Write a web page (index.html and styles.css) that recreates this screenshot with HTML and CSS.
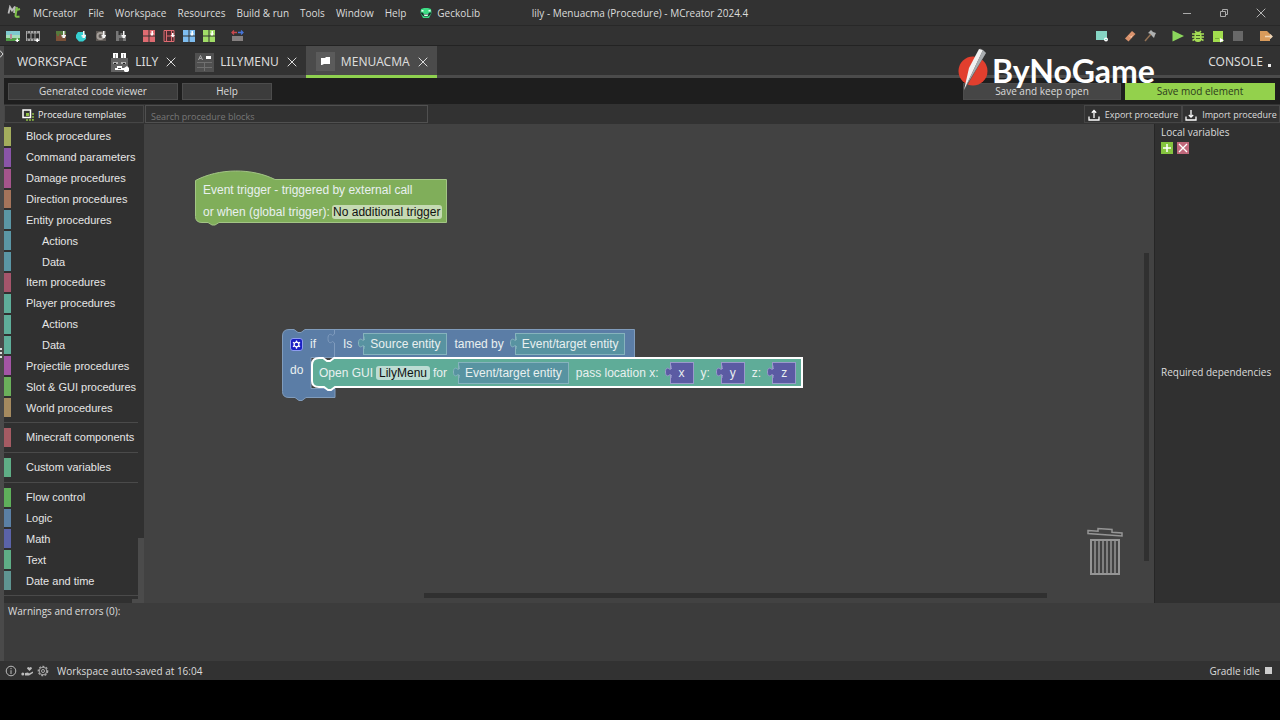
FILE: index.html
```html
<!DOCTYPE html>
<html lang="en">
<head>
  <meta charset="UTF-8">
  <meta name="viewport" content="width=device-width, initial-scale=1.0">
  <title>lily - Menuacma (Procedure) - MCreator 2024.4</title>
  <link rel="stylesheet" href="styles.css">
</head>
<body>
  <!-- shared shapes -->
  <svg class="defs" aria-hidden="true">
    <symbol id="down" viewBox="0 0 14 14"><path d="M9 2h1.500v4H12v1.500h-1V9H8.500V7.500h-1V6H9z" fill="#f4f4f4"/></symbol>
    <symbol id="x" viewBox="0 0 10 10"><path d="M.7.7l8.600 8.600M9.300.7L.7 9.300" fill="none" stroke="currentColor" stroke-width="1"/></symbol>
    <symbol id="grid" viewBox="0 0 14 14"><path d="M1 1h5.500v5.500H1zM7.500 1H13v5.500H7.500zM1 7.500h5.500V13H1zM7.500 7.500H13V13H7.500z" fill="currentColor"/><path d="M9.500 2H11v2.500h1L10 7 8 4.500h1.500z" fill="#fff"/></symbol>
    <symbol id="plug" viewBox="0 0 7 14"><path d="M7 .5V3L5 4.500C2.500 2 .5 3 .5 7s2 5 4.500 2.500l2 1.500V13" fill="inherit" stroke="inherit"/></symbol>
  </svg>

  <div class="app">
    <!-- Menu bar -->
    <header class="menubar">
      <svg class="logo" viewBox="0 0 14 14"><path d="M1.500 8.500L3 2l2 3.500L8 1.500 7 8" fill="none" stroke="#bdbdbd" stroke-width="1.800"/><path d="M10 2L8.500 10.500q0 2 4 1M8 5.500l5-1.500" fill="none" stroke="#7fc04a" stroke-width="2"/></svg>
      <nav class="menus">
        <button>MCreator</button>
        <button>File</button>
        <button>Workspace</button>
        <button>Resources</button>
        <button>Build &amp; run</button>
        <button>Tools</button>
        <button>Window</button>
        <button>Help</button>
        <button class="gecko"><svg viewBox="0 0 12 12"><path d="M1 2l3-1h4l3 1 .5 4L9 11H3L.5 6z" fill="#3ddc84"/><path d="M.5 5.500h2L4 7h4l1.500-1.500h2L10 8l-2 1.500H4L2 8z" fill="#12302a"/><path d="M3.500 7.500h5L7.500 9h-3zM1.500 3h2v1.500h-2zM8.500 3h2v1.500h-2z" fill="#e8fff2"/></svg>GeckoLib</button>
      </nav>
      <h1>lily - Menuacma (Procedure) - MCreator 2024.4</h1>
      <div class="window-buttons">
        <button aria-label="Minimize"><svg viewBox="0 0 10 10"><path d="M1 5.500h8" stroke="#aaa"/></svg></button>
        <button aria-label="Restore"><svg viewBox="0 0 10 10"><path d="M1.500 3.500h5v5h-5zM3.500 3.500v-2h5v5h-2" fill="none" stroke="#aaa"/></svg></button>
        <button aria-label="Close"><svg viewBox="0 0 10 10"><use href="#x"/></svg></button>
      </div>
    </header>

    <!-- Toolbar -->
    <div class="toolbar">
      <div class="tools">
        <button aria-label="Create texture"><svg viewBox="0 0 14 14"><path d="M0 2h14v10H0z" fill="#a6dcb9"/><path d="M0 2h14v4H0z" fill="#7ec8cf"/><path d="M0 9h14v3H0z" fill="#4f9b46"/><path d="M4 5h2v5H4z" fill="#b98a9b"/><path d="M10.500 9.500H12V11h1v1h-1v1h-1.500v-1h-1v-1h1z" fill="#fff"/></svg></button>
        <button aria-label="Create animated texture"><svg viewBox="0 0 14 14"><path d="M0 2h14v10H0z" fill="#a5a5a5"/><path d="M1 4.500h3.500v5H1zM5.500 4.500h3v5h-3zM9.500 4.500H13v5H9.500z" fill="#2a2a2a"/><path d="M1 2.500h1v1H1zM4 2.500h1v1H4zM7 2.500h1v1H7zM10 2.500h1v1h-1zM1 10.500h1v1H1zM4 10.500h1v1H4zM7 10.500h1v1H7z" fill="#2a2a2a"/><path d="M10.500 9.500H12V11h1v1h-1v1h-1.500v-1h-1v-1h1z" fill="#fff"/></svg></button>
      </div>
      <div class="tools">
        <button aria-label="Import block texture"><svg viewBox="0 0 14 14"><path d="M2 2h10v10H2z" fill="#7b5138"/><path d="M2 2h10v3H9v1H7V5H5v2H3V5H2z" fill="#557a3c"/><use href="#down"/></svg></button>
        <button aria-label="Import item texture"><svg viewBox="0 0 14 14"><path d="M4 3h5l3 3v4l-3 2.500H5L2 9V6z" fill="#36cfd0"/><use href="#down"/></svg></button>
        <button aria-label="Import entity texture"><svg viewBox="0 0 14 14"><path d="M2 2h10v10H2z" fill="#5e5955"/><circle cx="6.500" cy="7" r="3" fill="none" stroke="#a6a09b" stroke-width="2"/><use href="#down"/></svg></button>
        <button aria-label="Import armor texture"><svg viewBox="0 0 14 14"><path d="M2 2h2.500v4h2V4h2v2H12v6H2z" fill="#777"/><path d="M5 9h4v3H5z" fill="#4a4a4a"/><use href="#down"/></svg></button>
      </div>
      <div class="tools">
        <button aria-label="Import sound" class="red"><svg viewBox="0 0 14 14"><use href="#grid"/></svg></button>
        <button aria-label="Import structure" class="red"><svg viewBox="0 0 14 14"><path d="M2 1.500h10v11H2z" fill="#4c2c31" stroke="currentColor"/><path d="M4.500 2v10M9.500 2v10M4.500 7h5" stroke="currentColor"/><path d="M10 4h1.500v2h1.500l-2 2.500L8.500 6H10z" fill="#fff"/></svg></button>
        <button aria-label="Import Java model" class="blue"><svg viewBox="0 0 14 14"><use href="#grid"/></svg></button>
        <button aria-label="Import JSON model" class="lime"><svg viewBox="0 0 14 14"><use href="#grid"/></svg></button>
      </div>
      <div class="tools">
        <button aria-label="Variables"><svg viewBox="0 0 14 14"><path d="M2 7h11v5H2z" fill="#858080"/><path d="M2 3.500h5M4 1.500l-2 2 2 2" fill="none" stroke="#c9484d" stroke-width="1.300"/><path d="M8 3.500h5M11 1.500l2 2-2 2" fill="none" stroke="#4675d8" stroke-width="1.300"/></svg></button>
      </div>
      <div class="tools push">
        <button aria-label="New element"><svg viewBox="0 0 14 14"><path d="M1 2h11v9H1z" fill="#86d5c4"/><circle cx="11" cy="10.500" r="2" fill="#fff"/><path d="M10 10.500h2" stroke="#86d5c4"/></svg></button>
      </div>
      <div class="tools">
        <button aria-label="Clean"><svg viewBox="0 0 14 14"><path d="M9 2l3.500 3-7 7.500L2 9.500z" fill="#d9926c"/><path d="M6 6.500l2.500 2.500M8 8l1.500-1.500" stroke="#f4c2a5"/></svg></button>
        <button aria-label="Build"><svg viewBox="0 0 14 14"><path d="M2 12l6-7" stroke="#927154" stroke-width="1.500"/><path d="M5 4l3-3 2 2 3 1-1 2-1 3-2-2-1.500-2z" fill="#aeb0b0"/></svg></button>
      </div>
      <div class="tools">
        <button aria-label="Run client"><svg viewBox="0 0 14 14"><path d="M1.500 1.500L13 7 1.500 12.500z" fill="#8bd75c"/></svg></button>
        <button aria-label="Debug client"><svg viewBox="0 0 14 14"><path d="M4 2l1.500 1.500h3L10 2M1 5h3m6 0h3M1 8h12M1.500 11.500L4 10m8.500 1.500L10 10" fill="none" stroke="#a5dd55" stroke-width="1.500"/><rect x="3.500" y="3" width="7" height="10" rx="3" fill="#a5dd55"/><path d="M5 6.500h4M5 9.500h4" stroke="#45632a"/></svg></button>
        <button aria-label="Run server"><svg viewBox="0 0 14 14"><path d="M2 2h10v11H2z" fill="#a2dd4e"/><path d="M4 9.500h4" stroke="#79ad37"/><path d="M9 9l4 2.200-4 2.300z" fill="#fff"/></svg></button>
        <button aria-label="Stop"><svg viewBox="0 0 14 14"><path d="M2 2h10v10H2z" fill="#686868"/></svg></button>
      </div>
      <div class="tools">
        <button aria-label="Export"><svg viewBox="0 0 14 14"><path d="M1 2h7l3 3v7H1z" fill="#d99b5b"/><path d="M6 7.500h7M11 5.500l2 2-2 2" fill="none" stroke="#f3d7b6" stroke-width="1.300"/></svg></button>
      </div>
    </div>

    <div class="shell">
      <div class="gutter">
        <svg class="chevron" viewBox="0 0 4 10"><path d="M0 1.500l3 3.500-3 3.500" fill="none" stroke="#ddd"/></svg>
        <svg class="grip" viewBox="0 0 4 12"><path d="M0 1h2v2H0zM0 5h2v2H0zM0 9h2v2H0z" fill="#ddd"/></svg>
      </div>
      <main class="content">
        <!-- Tabs -->
        <div class="tabs">
          <div class="tab"><button class="tab-name">WORKSPACE</button></div>
          <div class="tab">
            <svg viewBox="0 0 19 19"><path d="M1 5h17v14H1z" fill="#626262"/><path d="M3 0h5v5H3zM11 0h5v5h-5z" fill="#fff"/><path d="M5 1h1v4H5zM13 1h1v4h-1z" fill="#999"/><path d="M3 9h5v2H3zM11 9h5v2h-5z" fill="#b0b0b0"/><path d="M4 10h2v1H4zM13 10h2v1h-2z" fill="#222"/><path d="M7 13h5v2h2v2H5v-2h2z" fill="#fff"/><path d="M8 15h3v1H8z" fill="#555"/><path d="M14 15l3-2 2 2v3l-3 2-2-2z" fill="#fff"/></svg>
            <button class="tab-name">LILY</button>
            <button class="close" aria-label="Close LILY"><svg viewBox="0 0 10 10"><use href="#x"/></svg></button>
          </div>
          <div class="tab">
            <svg viewBox="0 0 19 19"><path d="M0 0h19v19H0z" fill="#505050"/><path d="M2 9.500h15M2 14.500h15M9.500 9v9" fill="none" stroke="#707070"/><path d="M3.500 7l2-4.500 2 4.500M4.500 5.500h2" fill="none" stroke="#aaa"/><path d="M11 3h5v3h-5z" fill="#fff"/></svg>
            <button class="tab-name">LILYMENU</button>
            <button class="close" aria-label="Close LILYMENU"><svg viewBox="0 0 10 10"><use href="#x"/></svg></button>
          </div>
          <div class="tab active">
            <svg viewBox="0 0 19 19"><path d="M0 0h19v19H0z" fill="#5b5b5b"/><path d="M5 6h4l1-1h4v7H8l-2 1H5z" fill="#fff"/></svg>
            <button class="tab-name">MENUACMA</button>
            <button class="close" aria-label="Close MENUACMA"><svg viewBox="0 0 10 10"><use href="#x"/></svg></button>
          </div>
          <button class="console">CONSOLE <i></i></button>
        </div>

        <!-- Element actions -->
        <div class="actions">
          <button class="wide">Generated code viewer</button>
          <button>Help</button>
          <button class="keep">Save and keep open</button>
          <button class="save">Save mod element</button>
          <svg class="watermark" viewBox="0 0 204 48">
            <circle cx="16" cy="23" r="14.500" fill="#e23f2e"/>
            <path d="M23 0l6 5L7 43z" fill="#555"/><path d="M22 1l4 1L7 42l5-22z" fill="#f1f1f1"/><path d="M26 2l3 3L9 38z" fill="#a9adb0"/>
            <text x="35" y="35">ByNoGame</text>
          </svg>
        </div>

        <div class="searchbar">
          <button class="templates"><svg viewBox="0 0 12 12"><path d="M1 1h7.500v7.500H1z" fill="none" stroke="#fff" stroke-width="1.500"/><path d="M11 4v7H4" fill="none" stroke="#8fbf45" stroke-width="1.500" stroke-dasharray="2 1"/><path d="M4 4h3v3H4z" fill="#8fbf45"/></svg>Procedure templates</button>
          <input type="text" placeholder="Search procedure blocks" aria-label="Search procedure blocks">
          <button class="export"><svg viewBox="0 0 12 12"><path d="M1 7.500V11h10V7.500M6 9V1.500M3.800 3.800L6 1.500l2.200 2.300" fill="none" stroke="#fff" stroke-width="1.300"/></svg>Export procedure</button>
          <button class="import"><svg viewBox="0 0 12 12"><path d="M1 7.500V11h10V7.500M6 1v7M3.800 6L6 8.200 8.200 6" fill="none" stroke="#fff" stroke-width="1.300"/></svg>Import procedure</button>
        </div>

        <div class="editor">
          <!-- Toolbox -->
          <aside class="toolbox">
            <ul>
              <li class="c-block">Block procedures</li>
              <li class="c-command">Command parameters</li>
              <li class="c-damage">Damage procedures</li>
              <li class="c-direction">Direction procedures</li>
              <li class="c-entity">Entity procedures</li>
              <li class="c-entity sub">Actions</li>
              <li class="c-entity sub">Data</li>
              <li class="c-item">Item procedures</li>
              <li class="c-player">Player procedures</li>
              <li class="c-player sub">Actions</li>
              <li class="c-player sub">Data</li>
              <li class="c-projectile">Projectile procedures</li>
              <li class="c-slot">Slot &amp; GUI procedures</li>
              <li class="c-world">World procedures</li>
              <li class="separator"></li>
              <li class="c-minecraft">Minecraft components</li>
              <li class="separator"></li>
              <li class="c-custom">Custom variables</li>
              <li class="separator"></li>
              <li class="c-flow">Flow control</li>
              <li class="c-logic">Logic</li>
              <li class="c-math">Math</li>
              <li class="c-custom">Text</li>
              <li class="c-date">Date and time</li>
              <li class="separator"></li>
            </ul>
            <span class="thumb-v"></span>
            <span class="thumb-h"></span>
          </aside>

          <!-- Block canvas -->
          <section class="canvas">
            <div class="block event">
              <svg viewBox="0 0 252 56"><path d="M.5 10.500C24-2 57-2 80 9.500h171.500v43H24l-4 2.500h-3l-4-2.500H7q-6.500 0-6.500-6z" fill="#80ae5a" stroke="#a3c585"/></svg>
              <div class="row"><span>Event trigger - triggered by external call</span></div>
              <div class="row">
                <label for="trigger">or when (global trigger):</label>
                <select id="trigger" class="trigger"><option>No additional trigger</option></select>
              </div>
            </div>

            <div class="block branch">
              <svg viewBox="0 0 353 74"><path d="M7 .5h5l4 3h3l4-3h329.500v28H29v31h24v9H24l-4 3h-3l-4-3H7q-6.500 0-6.500-6V7Q.5.500 7 .5z" fill="#5b7da6" stroke="#809cbc"/><path d="M52.500 1v4l-2 1.500c-2.500-2.500-4.500-1-4.500 3s2 5.500 4.500 3l2 1.500V28" fill="none" stroke="#7f9bbd"/></svg>
              <div class="row">
                <button class="gear" aria-label="Edit if block"><svg viewBox="0 0 12 12"><circle cx="6" cy="6" r="2.600" fill="none" stroke="#fff" stroke-width="1.300"/><path d="M6 1.500v2M6 8.500v2M2.100 3.700l1.700 1M8.200 7.300l1.700 1M2.100 8.300l1.700-1M8.200 4.700l1.700-1" stroke="#fff" stroke-width="1.400"/></svg></button>
                <span class="if">if</span>
                <span>Is</span>
                <span class="value"><svg><use href="#plug"/></svg>Source entity</span>
                <span>tamed by</span>
                <span class="value"><svg><use href="#plug"/></svg>Event/target entity</span>
              </div>
              <div class="row do"><span>do</span></div>
            </div>

            <div class="block open-gui">
              <svg viewBox="0 0 492 32"><path d="M8 1h4l4 3h3l4-3h468v29H24l-4 3h-3l-4-3H8q-7 0-7-6V8q0-7 7-7z" fill="#5fac98" stroke="#fff" stroke-width="2"/></svg>
              <div class="row">
                <label for="gui">Open GUI</label>
                <select id="gui" class="gui"><option>LilyMenu</option></select>
                <span>for</span>
                <span class="value"><svg><use href="#plug"/></svg>Event/target entity</span>
                <span>pass location x:</span>
                <span class="value number"><svg><use href="#plug"/></svg>x</span>
                <span>y:</span>
                <span class="value number"><svg><use href="#plug"/></svg>y</span>
                <span>z:</span>
                <span class="value number"><svg><use href="#plug"/></svg>z</span>
              </div>
            </div>

            <svg class="trash" viewBox="0 0 36 48"><path d="M1 3.500l10 .7V1.500l14 1v2.700l10 .8v3L1 6.500z" fill="none" stroke="#959595" stroke-width="1.500"/><path d="M4 13h28v34H4z" fill="none" stroke="#959595" stroke-width="2"/><path d="M8 13v34M12 13v34M16 13v34M20 13v34M24 13v34M28 13v34" stroke="#959595" stroke-width="1.500"/></svg>
            <span class="scroll-v"></span>
            <span class="scroll-h"></span>
          </section>

          <!-- Variables -->
          <aside class="side">
            <section>
              <h2>Local variables</h2>
              <div class="var-buttons">
                <button class="add" aria-label="Add variable"><svg viewBox="0 0 12 12"><path d="M6 2v8M2 6h8" stroke="#fff" stroke-width="1.500"/></svg></button>
                <button class="remove" aria-label="Remove variable"><svg viewBox="0 0 12 12"><path d="M2 2l8 8M10 2l-8 8" stroke="#fff" stroke-width="1.300"/></svg></button>
              </div>
            </section>
            <section>
              <h2>Required dependencies</h2>
            </section>
          </aside>
        </div>

        <div class="warnings">Warnings and errors (0):</div>
      </main>
    </div>

    <!-- Status bar -->
    <footer class="status">
      <svg viewBox="0 0 12 12"><circle cx="6" cy="6" r="4.800" fill="none" stroke="#bbb"/><path d="M6 5.200V9M6 3v1.200" stroke="#bbb"/></svg>
      <svg viewBox="0 0 12 12"><circle cx="1.800" cy="9" r="1.500" fill="#bbb"/><path d="M4 8l3-.5 1 1 4-2v1.500L8 10.500H4z" fill="#bbb"/><path d="M8.500 6L6 3.500q0-1.500 1.500-1.500l1 .8 1-.8q1.500 0 1.500 1.500z" fill="#bbb"/></svg>
      <svg viewBox="0 0 12 12"><circle cx="6" cy="6" r="4.700" fill="none" stroke="#aaa" stroke-width="1.300" stroke-dasharray="2 1.500"/><circle cx="6" cy="6" r="3.800" fill="none" stroke="#aaa"/><circle cx="6" cy="6" r="1.500" fill="none" stroke="#aaa"/></svg>
      <span class="saved">Workspace auto-saved at 16:04</span>
      <span class="gradle">Gradle idle</span>
      <i></i>
    </footer>
  </div>
</body>
</html>
```

FILE: styles.css
```css
* {
  box-sizing: border-box;
}

body {
  margin: 0;
  padding-bottom: 40px;
  height: 100vh;
  background: #000;
  color: #dcdcdc;
  font-family: "Open Sans", "Noto Sans", sans-serif;
  font-size: 10px;
  line-height: 16px;
}

button, input, select {
  margin: 0;
  padding: 0;
  border: none;
  background: none;
  color: inherit;
  font: inherit;
}

h1, h2 {
  margin: 0;
  font-size: 10px;
  font-weight: normal;
  white-space: nowrap;
}

svg {
  display: block;
  flex: none;
}

.defs {
  position: absolute;
  width: 0;
  height: 0;
}

.app {
  display: flex;
  flex-direction: column;
  height: 100%;
  min-height: 640px;
  background: #323232;
}

/* menu bar */
.menubar {
  display: grid;
  grid-template-columns: 1fr auto 1fr;
  align-items: center;
  height: 26px;
  border-bottom: 1px solid #282828;
  position: relative;
}

.logo {
  width: 14px;
  height: 14px;
  position: absolute;
  left: 7px;
  top: 5px;
}

.menus {
  display: flex;
  gap: 11px;
  padding-left: 33px;
  white-space: nowrap;
}

.gecko {
  display: flex;
  align-items: center;
  gap: 5px;
  margin-left: 3px;
}

.gecko svg {
  width: 12px;
  height: 12px;
}

.window-buttons {
  display: flex;
  justify-content: flex-end;
  gap: 27px;
  padding-right: 14px;
  color: #b5b5b5;
}

.window-buttons svg {
  width: 10px;
  height: 10px;
}

/* toolbar */
.toolbar {
  display: flex;
  align-items: center;
  gap: 14px;
  height: 20px;
  padding: 0 7px 0 6px;
  border-bottom: 1px solid #232323;
}

.tools {
  display: flex;
  gap: 6px;
}

.tools svg {
  width: 14px;
  height: 14px;
}

.push {
  margin-left: auto;
}

.red { color: #df6b71; }
.blue { color: #7ebdf0; }
.lime { color: #a1dd67; }

/* main part */
.shell {
  display: flex;
  flex: 1;
  min-height: 0;
}

.gutter {
  width: 4px;
  background: #4a4a4a;
  display: flex;
  flex-direction: column;
  justify-content: space-between;
  padding: 3px 0 302px;
}

.chevron { width: 4px; height: 10px; }
.grip { width: 4px; height: 12px; }

.content {
  display: flex;
  flex-direction: column;
  flex: 1;
  min-width: 0;
}

.tabs {
  display: flex;
  height: 32px;
  border-bottom: 3px solid #4b4b4b;
  font-family: "Noto Sans", sans-serif;
  font-size: 12px;
}

.tab {
  display: flex;
  align-items: center;
  gap: 6px;
  height: 32px;
  padding: 2px 9px 2px 10px;
}

.tab:first-child {
  padding: 2px 13px;
}

.tab > svg {
  width: 19px;
  height: 19px;
}

.tab.active {
  padding-bottom: 0;
  background: #4b4b4b;
  border-bottom: 3px solid #8fd14f;
}

.close svg {
  width: 10px;
  height: 10px;
  margin-left: 2px;
}

.console {
  display: flex;
  align-items: center;
  gap: 5px;
  margin-left: auto;
  padding: 2px 9px 0 0;
}

.console i {
  width: 3px;
  height: 3px;
  margin-top: 8px;
  background: #eee;
}

.actions {
  display: flex;
  gap: 4px;
  align-items: center;
  height: 26px;
  padding: 0 5px 0 4px;
  background: #1e1e1e;
  position: relative;
}

.actions button {
  width: 90px;
  height: 17px;
  border: 1px solid #4c4c4c;
  background: #3c3c3c;
  line-height: 14px;
}

.actions .wide {
  width: 170px;
}

.actions .keep {
  width: 158px;
  margin-left: auto;
  background: #464646;
}

.actions .save {
  width: 150px;
  background: #93d14c;
  border-color: #93d14c;
  color: #2c3a1c;
}

.watermark {
  position: absolute;
  right: 119px;
  bottom: 8px;
  width: 204px;
  height: 48px;
}

.watermark text {
  font-family: "Lato", sans-serif;
  font-size: 32px;
  font-weight: bold;
  fill: #fff;
}

.searchbar {
  display: flex;
  height: 20px;
  padding-top: 1px;
  font-size: 9px;
}

.searchbar button {
  display: flex;
  align-items: center;
  justify-content: center;
  height: 18px;
  padding-top: 1px;
  border: 1px solid #464646;
  white-space: nowrap;
}

.searchbar svg {
  width: 12px;
  height: 12px;
}

.templates {
  width: 140px;
  gap: 4px;
  color: #eee;
}

.searchbar input {
  width: 283px;
  height: 18px;
  margin-left: 1px;
  padding: 4px 5px 0;
  border: 1px solid #505050;
}

.searchbar input::placeholder {
  color: #777;
  opacity: 1;
}

.export, .import {
  width: 98px;
  gap: 5px;
}

.export {
  margin-left: auto;
}

.editor {
  display: flex;
  flex: 1;
  min-height: 0;
}

/* toolbox */
.toolbox {
  display: flex;
  width: 140px;
  background: #303030;
  color: #e6e6e6;
  font-family: "Liberation Sans", Arial, sans-serif;
  font-size: 11px;
  position: relative;
}

.toolbox ul {
  display: flex;
  flex-direction: column;
  gap: 2px;
  width: 140px;
  margin: 0;
  padding: 3px 0 4px;
  list-style: none;
}

.toolbox li {
  display: flex;
  flex: 1;
  align-items: center;
  padding-left: 15px;
  border-left-width: 7px;
  border-left-style: solid;
  white-space: nowrap;
}

.toolbox li.sub {
  padding-left: 31px;
}

.toolbox li.separator {
  flex: none;
  height: 1px;
  margin: 3px 6px 3px 0;
  border: none;
  background: #4a4a4a;
}

.c-block { border-left-color: #a3ad5d; }
.c-command { border-left-color: #8a55a8; }
.c-damage { border-left-color: #a5558c; }
.c-direction { border-left-color: #a5745b; }
.c-entity { border-left-color: #5b96a5; }
.c-item { border-left-color: #a5556b; }
.c-player { border-left-color: #5fae9a; }
.c-projectile { border-left-color: #a355a5; }
.c-slot { border-left-color: #6bb05b; }
.c-world { border-left-color: #a58a5f; }
.c-minecraft { border-left-color: #a55b63; }
.c-custom { border-left-color: #5fae86; }
.c-flow { border-left-color: #5fb05b; }
.c-logic { border-left-color: #5b80a5; }
.c-math { border-left-color: #5b63a8; }
.c-date { border-left-color: #5f9491; }

.thumb-v, .thumb-h {
  position: absolute;
  right: 0;
  bottom: 0;
  background: #4b4b4b;
}

.thumb-v { width: 6px; height: 65px; }
.thumb-h { width: 12px; height: 4px; }

/* canvas with free blocks */
.canvas {
  flex: 1;
  min-width: 0;
  overflow: hidden;
  position: relative;
  background: #424242;
  color: #e9f0f0;
  font-family: "Liberation Sans", Arial, sans-serif;
  font-size: 12px;
}

.block {
  position: absolute;
  white-space: nowrap;
}

.block > svg {
  position: absolute;
  left: 0;
  top: 0;
  width: 100%;
  height: 100%;
  overflow: visible;
}

.row {
  display: flex;
  align-items: center;
  gap: 7px;
  position: relative;
}

.event {
  left: 51px;
  top: 46px;
  width: 252px;
  height: 56px;
  padding: 9px 0 0 8px;
}

.event .row {
  height: 22px;
  gap: 2px;
}

.block select {
  height: 14px;
  border-radius: 3px;
  color: #111;
  line-height: 14px;
  text-align: center;
  appearance: none;
}

.trigger {
  width: 110px;
  background: #c5dab3;
}

.branch {
  left: 138px;
  top: 205px;
  width: 353px;
  height: 74px;
  padding-left: 8px;
}

.branch .row {
  height: 30px;
}

.branch .do {
  height: 22px;
}

.if {
  width: 26px;
}

.gear {
  width: 13px;
  height: 13px;
  border: 1px solid #8d9cf0;
  border-radius: 3px;
  background: #1a1fc4;
}

.gear svg {
  width: 11px;
  height: 11px;
}

.value {
  height: 22px;
  margin-left: 4px;
  padding: 0 6px;
  border: 1px solid #86b3bd;
  background: #5893a1;
  line-height: 20px;
  position: relative;
}

.value svg {
  position: absolute;
  left: -6px;
  top: 2px;
  width: 7px;
  height: 14px;
  fill: #5893a1;
  stroke: #86b3bd;
}

.number {
  width: 24px;
  padding: 0;
  border-color: #9a9acb;
  background: #5b5ba3;
  text-align: center;
}

.number svg {
  fill: #5b5ba3;
  stroke: #9a9acb;
}

.open-gui {
  left: 167px;
  top: 233px;
  width: 492px;
  height: 32px;
  padding-left: 8px;
}

.open-gui .row {
  height: 31px;
}

.gui {
  width: 54px;
  margin: 0 -4px;
  background: #bcdcd3;
}

.trash {
  position: absolute;
  right: 31px;
  bottom: 28px;
  width: 36px;
  height: 48px;
}

.scroll-v, .scroll-h {
  position: absolute;
  background: #303030;
}

.scroll-v {
  right: 5px;
  top: 27%;
  bottom: 42px;
  width: 5px;
}

.scroll-h {
  left: 280px;
  right: 107px;
  bottom: 5px;
  height: 5px;
}

.side {
  display: flex;
  flex-direction: column;
  width: 126px;
  border-left: 1px solid #262626;
  background: #303030;
}

.side section {
  flex: 1;
  padding-left: 6px;
}

.var-buttons {
  display: flex;
  gap: 4px;
  padding-top: 2px;
}

.var-buttons button {
  width: 12px;
  height: 12px;
}

.var-buttons svg {
  width: 12px;
  height: 12px;
}

.var-buttons .add { background: #85c43f; }
.var-buttons .remove { background: #c0677a; }

.warnings {
  height: 58px;
  padding-left: 4px;
  background: #3c3c3c;
}

.status {
  display: flex;
  align-items: center;
  gap: 4px;
  height: 19px;
  padding: 0 8px 0 5px;
}

.status svg {
  width: 12px;
  height: 12px;
}

.saved {
  margin-left: 4px;
}

.gradle {
  margin-left: auto;
}

.status i {
  width: 7px;
  height: 7px;
  margin-left: 1px;
  background: #ccc;
}
```
